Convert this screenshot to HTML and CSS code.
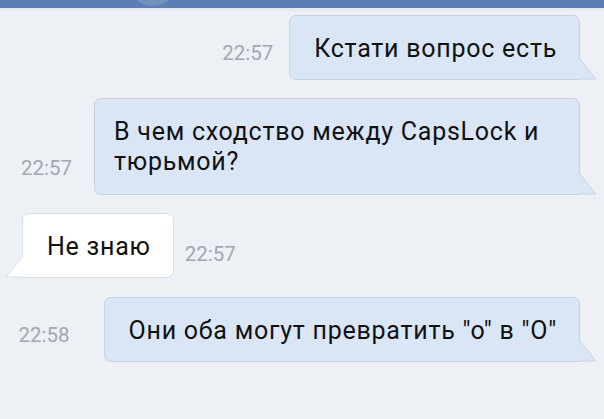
FILE: index.html
```html
<!DOCTYPE html>
<html lang="ru">
<head>
<meta charset="utf-8">
<title>Чат</title>
<link rel="stylesheet" href="styles.css">
</head>
<body>
<div class="topbar"><span class="avatar-edge"></span></div>
<div class="chat">
  <div class="row out r1">
    <span class="time">22:57</span>
    <div class="bubble out">Кстати вопрос есть<svg class="tail tail-out" width="18" height="22" viewBox="0 0 18 22"><polygon points="0,0 17,21 0,21" class="tp"/><polyline points="0,0 17,21 0,21" class="ts"/></svg></div>
  </div>
  <div class="row out r2">
    <span class="time">22:57</span>
    <div class="bubble out wide">В чем сходство между CapsLock и тюрьмой?<svg class="tail tail-out" width="18" height="22" viewBox="0 0 18 22"><polygon points="0,0 17,21 0,21" class="tp"/><polyline points="0,0 17,21 0,21" class="ts"/></svg></div>
  </div>
  <div class="row in r3">
    <div class="bubble in">Не знаю<svg class="tail tail-in" width="18" height="22" viewBox="0 0 18 22"><polygon points="18,0 1,21 18,21" class="tp"/><polyline points="18,0 1,21 18,21" class="ts"/></svg></div>
    <span class="time">22:57</span>
  </div>
  <div class="row out r4">
    <span class="time">22:58</span>
    <div class="bubble out single">Они оба могут превратить "о" в "О"<svg class="tail tail-out" width="18" height="22" viewBox="0 0 18 22"><polygon points="0,0 17,21 0,21" class="tp"/><polyline points="0,0 17,21 0,21" class="ts"/></svg></div>
  </div>
</div>
</body>
</html>
```
FILE: styles.css
```css
html, body {
  margin: 0;
  padding: 0;
}
body {
  background: #edf0f5;
  font-family: Roboto, "Noto Sans", sans-serif;
  width: 604px;
  height: 419px;
  overflow: hidden;
}
.topbar {
  position: relative;
  height: 8px;
  background: #5b7eb4;
  border-bottom: 3px solid #e5ebf3;
}
.avatar-edge {
  position: absolute;
  left: 136px;
  top: -14px;
  width: 34px;
  height: 20px;
  border-radius: 50%;
  background: #7390bd;
}
.chat {
  display: flex;
  flex-direction: column;
  gap: 18px;
  padding: 4px 24px 0 18px;
}
.row {
  display: flex;
  align-items: flex-end;
  gap: 16px;
}
.row.out {
  justify-content: flex-end;
}
.row.in {
  justify-content: flex-start;
  gap: 11px;
  padding-left: 4px;
}
.r2 { gap: 22px; }
.r4 { gap: 34px; }
.time {
  font-size: 20.5px;
  line-height: 24px;
  color: #a2a8b2;
  margin-bottom: 15px;
  white-space: nowrap;
}
.row.in .time {
  margin-bottom: 12px;
}
.bubble {
  position: relative;
  font-size: 25px;
  letter-spacing: 0.75px;
  line-height: 30px;
  color: #111;
  padding: 18px 22px 15px 24px;
  border-radius: 7px;
}
.bubble.single {
  white-space: nowrap;
  flex-shrink: 0;
}
.bubble.out {
  background: #dae6f6;
  border: 1px solid #c6d2e0;
  border-bottom-right-radius: 0;
}
.bubble.in {
  background: #fff;
  border: 1px solid #d9dee6;
  border-bottom-left-radius: 0;
}
.bubble.wide {
  width: 447px;
  padding-left: 19px;
  padding-right: 18px;
  padding-bottom: 17px;
}
.r4 {
  margin-top: 1px;
}
.tail {
  position: absolute;
  bottom: -1px;
  display: block;
}
.tail-out {
  right: -18px;
}
.tail-in {
  left: -18px;
}
.tail-out .tp { fill: #dae6f6; }
.tail-in .tp { fill: #fff; }
.tail .ts {
  fill: none;
  stroke-width: 1;
}
.tail-out .ts { stroke: #c6d2e0; }
.tail-in .ts { stroke: #d9dee6; }
```
